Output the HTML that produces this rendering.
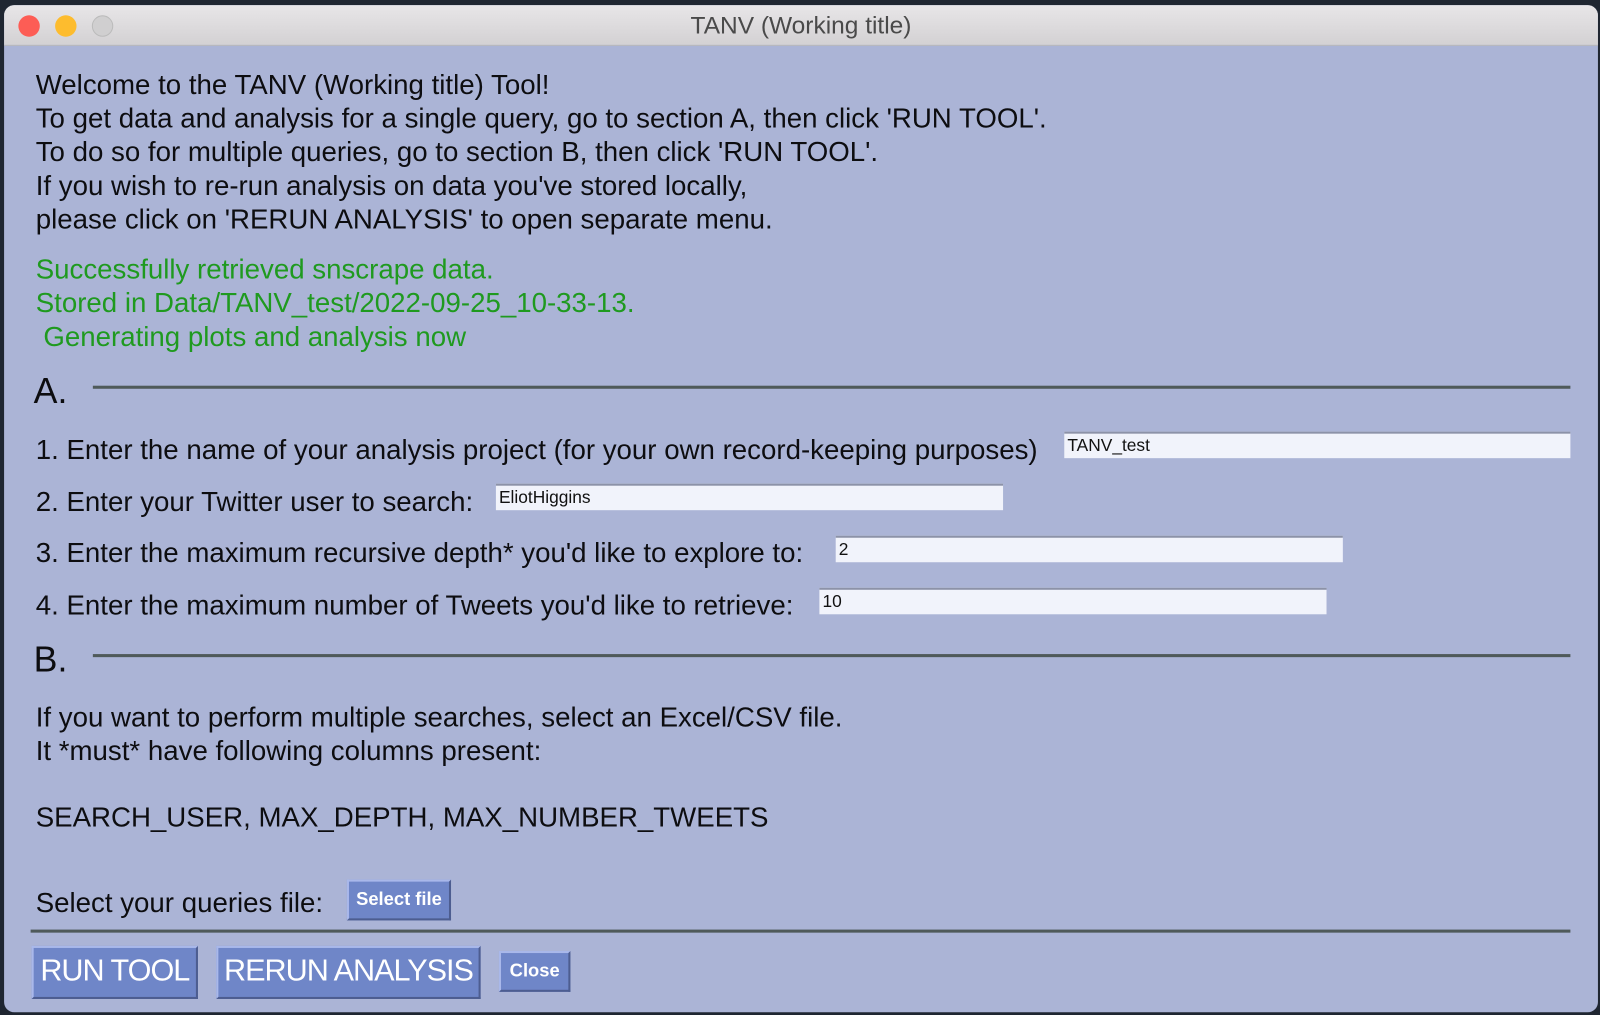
<!DOCTYPE html>
<html><head><meta charset="utf-8"><style>
*{margin:0;padding:0;box-sizing:border-box}
body{width:1600px;height:1015px;background:#1f2631;position:relative;overflow:hidden;font-family:"Liberation Sans",Arial,sans-serif}
#s{position:absolute;left:0;top:0;width:1568px;height:995px;transform:scale(1.0204);transform-origin:0 0}
.win{position:absolute;left:4px;top:5px;width:1562px;height:987px;background:#abb4d6;border-radius:10px;overflow:hidden}
.tb{position:absolute;left:0;top:0;width:100%;height:40px;background:linear-gradient(#e8e6e8,#d3d1d3);border-bottom:1px solid #b8b8bc}
.tb .t{position:absolute;left:0;right:0;top:7px;text-align:center;font-size:24px;color:#4a4a4a}
.dot{position:absolute;top:10px;width:21px;height:21px;border-radius:50%}
.tx{position:absolute;font-size:27.1px;color:#0d0d10;white-space:pre;line-height:33px}
.g{color:#1f9a1f}
.inp{position:absolute;height:26px;background:#f1f3fb;border-top:2px solid #8c92a8;font-size:17px;padding:2px 3px;color:#111}
.hr{position:absolute;height:3px;background:#4f5a5a}
.btn{position:absolute;background:#6f86c8;color:#fff;border-top:2px solid #a9b8ea;border-left:2px solid #a9b8ea;border-right:2px solid #4d5d90;border-bottom:2px solid #4d5d90;text-align:center;white-space:nowrap}
</style></head><body>
<div id="s">
<div class="win">
<div class="tb"><div class="dot" style="left:14px;background:#fd5d55"></div><div class="dot" style="left:50px;background:#fdbc2e"></div><div class="dot" style="left:86px;background:#d0cfd0;border:1px solid #bbb"></div><div class="t">TANV (Working title)</div></div>
</div>
<div class="tx" style="left:35px;top:66px">Welcome to the TANV (Working title) Tool!
To get data and analysis for a single query, go to section A, then click 'RUN TOOL'.
To do so for multiple queries, go to section B, then click 'RUN TOOL'.
If you wish to re-run analysis on data you've stored locally,
please click on 'RERUN ANALYSIS' to open separate menu.</div>
<div class="tx g" style="left:35px;top:247px">Successfully retrieved snscrape data.
Stored in Data/TANV_test/2022-09-25_10-33-13.
 Generating plots and analysis now</div>
<div class="tx" style="left:33px;top:367px;font-size:35px">A.</div>
<div class="hr" style="left:91px;top:378px;width:1448px"></div>
<div class="tx" style="left:35px;top:424px">1. Enter the name of your analysis project (for your own record-keeping purposes)</div>
<div class="inp" style="left:1043px;top:423px;width:496px">TANV_test</div>
<div class="tx" style="left:35px;top:475px">2. Enter your Twitter user to search:</div>
<div class="inp" style="left:486px;top:474px;width:497px">EliotHiggins</div>
<div class="tx" style="left:35px;top:525px">3. Enter the maximum recursive depth* you'd like to explore to:</div>
<div class="inp" style="left:819px;top:525px;width:497px">2</div>
<div class="tx" style="left:35px;top:576px">4. Enter the maximum number of Tweets you'd like to retrieve:</div>
<div class="inp" style="left:803px;top:576px;width:497px">10</div>
<div class="tx" style="left:33px;top:630px;font-size:35px">B.</div>
<div class="hr" style="left:91px;top:641px;width:1448px"></div>
<div class="tx" style="left:35px;top:686px">If you want to perform multiple searches, select an Excel/CSV file.
It *must* have following columns present:</div>
<div class="tx" style="left:35px;top:784px">SEARCH_USER, MAX_DEPTH, MAX_NUMBER_TWEETS</div>
<div class="tx" style="left:35px;top:868px">Select your queries file:</div>
<div class="btn" style="left:340px;top:862px;width:102px;height:40px;font-size:18px;line-height:34px;font-weight:bold">Select file</div>
<div class="hr" style="left:30px;top:911px;width:1509px"></div>
<div class="btn" style="left:31px;top:927px;width:163px;height:52px;font-size:30px;line-height:46px;letter-spacing:-1px">RUN TOOL</div>
<div class="btn" style="left:212px;top:927px;width:259px;height:52px;font-size:30px;line-height:46px;letter-spacing:-1px">RERUN ANALYSIS</div>
<div class="btn" style="left:489px;top:932px;width:70px;height:40px;font-size:18px;line-height:34px;font-weight:bold">Close</div>
</div>
</body></html>
